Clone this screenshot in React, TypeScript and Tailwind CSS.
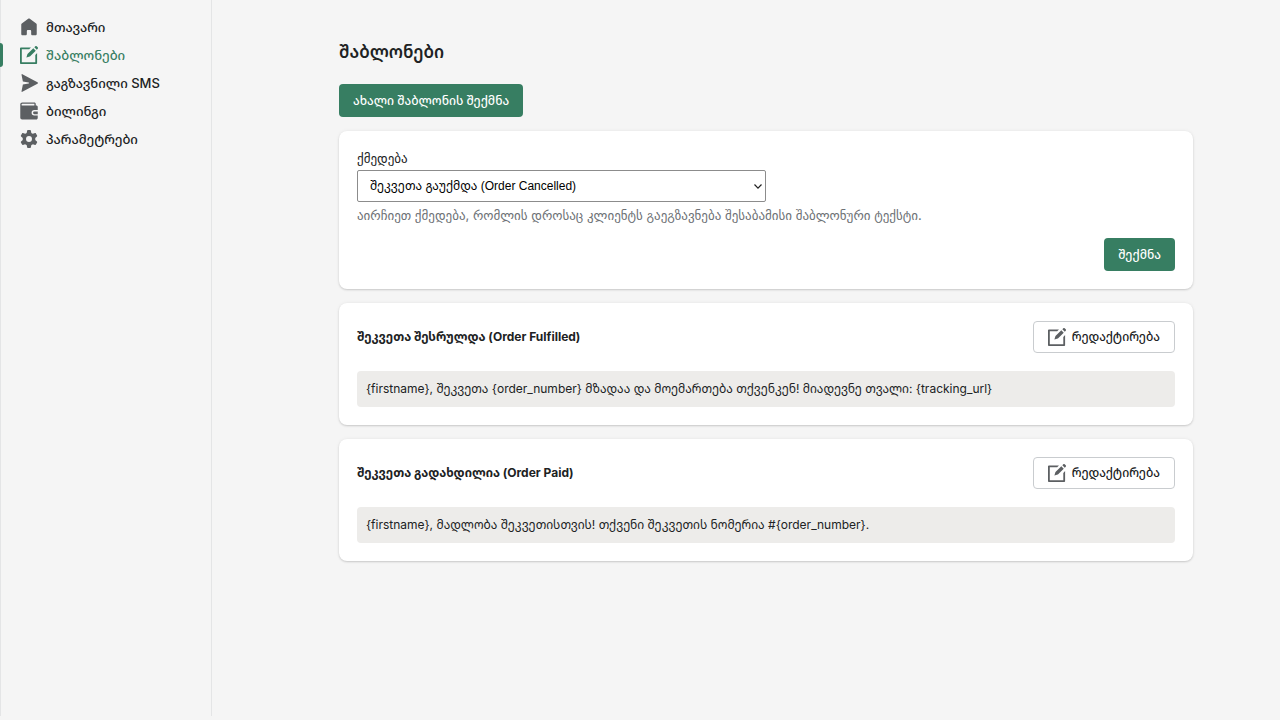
import type { ReactNode } from "react";

type IconProps = { className?: string };

function HomeIcon({ className }: IconProps) {
  return (
    <svg viewBox="0 0 20 20" className={className} fill="currentColor" aria-hidden="true">
      <path d="M18.600 7.300v10.400c0 .8-.6 1.500-1.400 1.500h-3.400c-.8 0-1.400-.7-1.400-1.500v-3.100c0-.7-.5-1.200-1.200-1.200H8.800c-.7 0-1.200.5-1.200 1.200v3.100c0 .8-.6 1.500-1.400 1.500H2.800c-.8 0-1.400-.7-1.400-1.500V7.300c0-.5.2-.9.6-1.200L9.100.9c.5-.4 1.300-.4 1.800 0L18 6.100c.4.3.6.7.6 1.200z" />
    </svg>
  );
}

function ComposeIcon({ className }: IconProps) {
  return (
    <svg viewBox="0 0 20 20" className={className} fill="currentColor" aria-hidden="true">
      <path d="M19.700 1.500 18.500.3a1.050 1.050 0 0 0-1.500 0l-1.050 1.050 2.700 2.700 1.050-1.050a1.050 1.050 0 0 0 0-1.500zM8.600 8.700 14.800 2.500l2.700 2.700-6.200 6.200c-.2.2-.4.300-.6.400l-3.500 1.100c-.1 0-.2-.1-.1-.2L8.200 9.300c.1-.2.2-.4.400-.6z" />
      <path d="M1.300 1.600h10.900l-2 2H2v14.400h15V9.900l2-2v11.200c0 .5-.4.900-.9.900H.9c-.5 0-.9-.4-.9-.900V2.500c0-.6.600-.900 1.300-.900z" />
    </svg>
  );
}

function SendIcon({ className }: IconProps) {
  return (
    <svg viewBox="0 0 20 20" className={className} fill="currentColor" aria-hidden="true">
      <path d="M2.600.2c-.5-.3-1 .1-.9.600L3.200 8.400l6.400 1c.7.100.7 1.100 0 1.200l-6.400 1-1.500 7.600c-.1.500.4.900.9.600l16.800-8.900c.7-.4.7-1.400 0-1.800z" />
    </svg>
  );
}

function WalletIcon({ className }: IconProps) {
  return (
    <svg viewBox="0 0 20 20" className={className} fill="currentColor" fillRule="evenodd" aria-hidden="true">
      <path d="M2.500.500H16c.8 0 1.500.7 1.500 1.500v2h.5c1 0 1.700.7 1.700 1.600V9h-3.800a3 3 0 0 0 0 6h3.800v2.800c0 .9-.7 1.700-1.700 1.700H2.300A2 2 0 0 1 .3 17.500V2.600C.3 1.400 1.300.5 2.500.5zM2.700 2a1 1 0 0 0 0 2H16V2z" />
      <path d="M16 10.500h3.700v3H16a1.500 1.500 0 0 1 0-3z" />
    </svg>
  );
}

function GearIcon({ className }: IconProps) {
  return (
    <svg viewBox="0 0 20 20" className={className} fill="currentColor" fillRule="evenodd" aria-hidden="true">
      <path d="M8.700 0h2.600c.4 0 .7.300.8.700l.5 2.500c.6.200 1.200.6 1.700 1l2.400-.8c.4-.1.8 0 1 .400l1.300 2.200c.2.400.1.800-.2 1.100l-1.900 1.700a7 7 0 0 1 0 2.400l1.900 1.700c.3.300.4.700.2 1.100l-1.300 2.200c-.2.400-.6.500-1 .4l-2.400-.8c-.5.4-1.100.8-1.700 1l-.5 2.500c-.1.400-.4.700-.8.700H8.700c-.4 0-.7-.3-.8-.7l-.5-2.500c-.6-.2-1.200-.6-1.700-1l-2.400.8c-.4.100-.8 0-1-.4L1 14c-.2-.4-.1-.8.2-1.100l1.900-1.700a7 7 0 0 1 0-2.400L1.200 7.100C.9 6.800.8 6.400 1 6l1.300-2.200c.2-.4.6-.5 1-.4l2.400.8c.5-.4 1.100-.8 1.700-1L7.900.7c.1-.4.4-.7.8-.7zM10 6.700a3.300 3.300 0 1 0 0 6.600 3.300 3.300 0 0 0 0-6.600z" />
    </svg>
  );
}

const navItems = [
  { label: "მთავარი", Icon: HomeIcon, active: false },
  { label: "შაბლონები", Icon: ComposeIcon, active: true },
  { label: "გაგზავნილი SMS", Icon: SendIcon, active: false },
  { label: "ბილინგი", Icon: WalletIcon, active: false },
  { label: "პარამეტრები", Icon: GearIcon, active: false },
];

const templates = [
  {
    title: "შეკვეთა შესრულდა (Order Fulfilled)",
    body: "{firstname}, შეკვეთა {order_number} მზადაა და მოემართება თქვენკენ! მიადევნე თვალი: {tracking_url}",
  },
  {
    title: "შეკვეთა გადახდილია (Order Paid)",
    body: "{firstname}, მადლობა შეკვეთისთვის! თქვენი შეკვეთის ნომერია #{order_number}.",
  },
];

function Card({ children }: { children: ReactNode }) {
  return (
    <section className="rounded-lg bg-white p-[18px] shadow-[0_1px_2px_rgba(0,0,0,0.16),0_0_4px_rgba(23,24,24,0.05)]">
      {children}
    </section>
  );
}

function PrimaryButton({ children }: { children: ReactNode }) {
  return (
    <button type="button" className="block h-[33px] rounded bg-[#377e62] px-3.5 text-xs font-medium text-white">
      {children}
    </button>
  );
}

export default function App() {
  return (
    <div className="flex min-h-screen bg-[#f5f5f5] font-['Inter','Noto_Sans_Georgian','DejaVu_Sans',sans-serif] text-[13px] leading-[18px] text-[#202223]">
      <nav className="mb-1 w-[212px] shrink-0 border-x border-[#e4e5e6] pt-[13px]">
        <ul>
          {navItems.map(({ label, Icon, active }) => (
            <li key={label} className="relative">
              {active && <span className="absolute inset-y-0.5 -left-px w-[3px] rounded-r bg-[#377e62]" />}
              <a
                href="#"
                className={`flex h-7 items-center gap-2 pl-[19px] font-medium whitespace-nowrap ${active ? "text-[#377e62]" : ""}`}
              >
                <Icon className={`size-[18px] shrink-0 ${active ? "" : "text-[#5c5f62]"}`} />
                {label}
              </a>
            </li>
          ))}
        </ul>
      </nav>

      <main className="flex-1 pl-10 pt-[38px]">
        <div className="mx-auto flex max-w-[854px] flex-col gap-3.5">
          <h1 className="mb-1 text-[17px] leading-7 font-semibold">შაბლონები</h1>
          <div>
            <PrimaryButton>ახალი შაბლონის შექმნა</PrimaryButton>
          </div>

          <Card>
            <label
              htmlFor="action"
              className="mb-[3px] block font-['Inter','DejaVu_Sans',sans-serif]"
            >
              ქმედება
            </label>
            <div className="relative w-1/2">
              <select
                id="action"
                className="block h-8 w-full appearance-none rounded-xs border border-[#8c8c8c] bg-white px-3 font-['Liberation_Sans','Noto_Sans_Georgian',sans-serif] text-xs text-black"
              >
                <option>შეკვეთა გაუქმდა (Order Cancelled)</option>
              </select>
              <svg
                viewBox="0 0 8 5"
                className="pointer-events-none absolute top-3.5 right-1 h-[5px] w-2"
                fill="none"
                stroke="#222"
                strokeWidth="1.2"
                aria-hidden="true"
              >
                <path d="M.5.500 4 4.100 7.500.5" />
              </svg>
            </div>
            <p className="mt-1 font-['Inter','DejaVu_Sans',sans-serif] text-[#6d7175]">
              აირჩიეთ ქმედება, რომლის დროსაც კლიენტს გაეგზავნება შესაბამისი შაბლონური ტექსტი.
            </p>
            <div className="mt-3.5 flex justify-end">
              <PrimaryButton>შექმნა</PrimaryButton>
            </div>
          </Card>

          {templates.map((t) => (
            <Card key={t.title}>
              <div className="flex items-center justify-between">
                <h2 className="text-xs font-bold">{t.title}</h2>
                <button
                  type="button"
                  className="flex h-8 items-center gap-1.5 rounded border border-[#c9cccf] bg-white px-3.5 text-xs font-medium"
                >
                  <ComposeIcon className="size-[18px] text-[#5c5f62]" />
                  რედაქტირება
                </button>
              </div>
              <p className="mt-[18px] rounded bg-[#edecea] p-[9px] text-xs leading-[18px]">{t.body}</p>
            </Card>
          ))}
        </div>
      </main>
    </div>
  );
}
